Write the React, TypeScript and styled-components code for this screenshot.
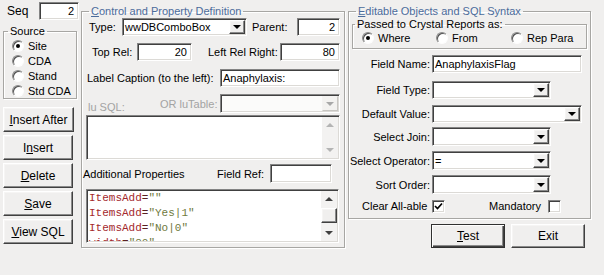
import React from "react"
import styled, { createGlobalStyle, css } from "styled-components"

const GlobalStyle = createGlobalStyle`
  html, body {
    margin: 0;
    padding: 0;
    background: #f0efee;
  }
  * {
    box-sizing: border-box;
  }
  body {
    font-family: "Liberation Sans", Arial, sans-serif;
    font-size: 11px;
    color: #000;
  }
`

const Window = styled.div`
  width: 604px;
  height: 275px;
  display: flex;
  background: #f0efee;
  overflow: hidden;
`

const LeftCol = styled.div`
  width: 74px;
  margin-left: 3px;
  display: flex;
  flex-direction: column;
`

const MidCol = styled.div`
  display: flex;
  flex-direction: column;
  margin-left: 4px;
`

const RightCol = styled.div`
  display: flex;
  flex-direction: column;
  margin-left: 3px;
`

const Row = styled.div<{ $h?: number; $mt?: number }>`
  display: flex;
  align-items: center;
  height: ${(p) => p.$h ?? 18}px;
  margin-top: ${(p) => p.$mt ?? 0}px;
  flex-shrink: 0;
`

const Label = styled.span<{ $w?: number; $ml?: number; $right?: boolean; $muted?: boolean; $low?: boolean }>`
  display: block;
  width: ${(p) => (p.$w ? `${p.$w}px` : "auto")};
  margin-left: ${(p) => p.$ml ?? 0}px;
  padding-right: ${(p) => (p.$right ? 2 : 0)}px;
  text-align: ${(p) => (p.$right ? "right" : "left")};
  color: ${(p) => (p.$muted ? "#a3a3a3" : "#000")};
  white-space: nowrap;
  flex-shrink: 0;
  align-self: ${(p) => (p.$low ? "flex-end" : "center")};
`

const sunken = css`
  border: 1px solid;
  border-color: #848484 #ffffff #ffffff #848484;
  box-shadow: inset 1px 1px 0 #404040, inset -1px -1px 0 #dcdad6;
`

const raised = css`
  border: 1px solid;
  border-color: #ffffff #404040 #404040 #ffffff;
  box-shadow: inset -1px -1px 0 #8a8a8a, inset 1px 1px 0 #f6f5f4;
  background: #f0efee;
`

const TextBox = styled.div<{ $w: number; $h?: number; $ml?: number; $right?: boolean }>`
  ${sunken}
  width: ${(p) => p.$w}px;
  height: ${(p) => p.$h ?? 18}px;
  margin-left: ${(p) => p.$ml ?? 0}px;
  background: #fff;
  display: flex;
  align-items: center;
  justify-content: ${(p) => (p.$right ? "flex-end" : "flex-start")};
  padding: 0 ${(p) => (p.$right ? 4 : 2)}px 0 2px;
  flex-shrink: 0;
  white-space: nowrap;
  overflow: hidden;
`

const ComboBox = styled.div<{ $w: number; $h?: number; $ml?: number; $disabled?: boolean }>`
  ${sunken}
  width: ${(p) => p.$w}px;
  height: ${(p) => p.$h ?? 18}px;
  margin-left: ${(p) => p.$ml ?? 0}px;
  background: ${(p) => (p.$disabled ? "#fbfbfa" : "#fff")};
  display: flex;
  align-items: stretch;
  padding: 1px;
  flex-shrink: 0;
`

const ComboText = styled.span`
  flex: 1;
  display: flex;
  align-items: center;
  padding-left: 1px;
  white-space: nowrap;
  overflow: hidden;
`

const DropButton = styled.span<{ $disabled?: boolean }>`
  ${raised}
  width: 16px;
  display: flex;
  align-items: center;
  justify-content: center;
  ${(p) =>
    p.$disabled &&
    css`
      border-color: #f4f3f2 #c8c6c2 #c8c6c2 #f4f3f2;
      box-shadow: none;
      background: #f3f2f0;
    `}

  &::after {
    content: "";
    width: 0;
    height: 0;
    border-left: 4px solid transparent;
    border-right: 4px solid transparent;
    border-top: 4px solid ${(p) => (p.$disabled ? "#a8a8a8" : "#000")};
  }
`

const Group = styled.fieldset<{ $w: number; $mt?: number; $ml?: number; $pb?: number }>`
  margin: ${(p) => p.$mt ?? 0}px 0 0 ${(p) => p.$ml ?? 0}px;
  padding: 0 0 ${(p) => p.$pb ?? 0}px 0;
  width: ${(p) => p.$w}px;
  min-inline-size: 0;
  border: 1px solid #a7a6a3;
  box-shadow: inset 1px 1px 0 #fff, 1px 1px 0 #fff;
  display: flex;
  flex-direction: column;
`

const Legend = styled.legend<{ $ml: number; $blue?: boolean }>`
  margin-left: ${(p) => p.$ml}px;
  padding: 0 2px;
  line-height: 13px;
  height: 13px;
  color: ${(p) => (p.$blue ? "#4c6c9c" : "#000")};
  white-space: nowrap;
`

const RadioItem = styled.label<{ $w?: number; $ml?: number; $h?: number }>`
  display: flex;
  align-items: center;
  gap: 4px;
  height: ${(p) => p.$h ?? 15}px;
  width: ${(p) => (p.$w ? `${p.$w}px` : "auto")};
  margin-left: ${(p) => p.$ml ?? 0}px;
  flex-shrink: 0;
  white-space: nowrap;
`

const RadioDot = styled.span<{ $on?: boolean }>`
  width: 12px;
  height: 12px;
  border-radius: 50%;
  background: #fff;
  border: 1px solid;
  border-color: #8a8a8a #fdfdfd #fdfdfd #8a8a8a;
  box-shadow: inset 1px 1px 0 #505050;
  position: relative;
  flex-shrink: 0;

  &::after {
    content: "";
    display: ${(p) => (p.$on ? "block" : "none")};
    position: absolute;
    left: 3px;
    top: 3px;
    width: 4px;
    height: 4px;
    border-radius: 50%;
    background: #000;
  }
`

const CheckBox = styled.span<{ $ml?: number }>`
  ${sunken}
  width: 13px;
  height: 13px;
  margin-left: ${(p) => p.$ml ?? 0}px;
  background: #fff;
  display: flex;
  align-items: center;
  justify-content: center;
  flex-shrink: 0;
`

const Button = styled.button<{ $w: number; $h?: number; $mt?: number; $ml?: number; $default?: boolean }>`
  ${raised}
  width: ${(p) => p.$w}px;
  height: ${(p) => p.$h ?? 25}px;
  margin: ${(p) => p.$mt ?? 0}px 0 0 ${(p) => p.$ml ?? 0}px;
  padding: 0;
  font: inherit;
  font-size: 12px;
  color: #000;
  flex-shrink: 0;
  ${(p) =>
    p.$default &&
    css`
      border-color: #303030;
      box-shadow: inset 1px 1px 0 #fff, inset -1px -1px 0 #404040, inset -2px -2px 0 #8a8a8a;
    `}
`

const Memo = styled.div<{ $w: number; $h: number; $mt?: number; $ml?: number }>`
  ${sunken}
  width: ${(p) => p.$w}px;
  height: ${(p) => p.$h}px;
  margin: ${(p) => p.$mt ?? 0}px 0 0 ${(p) => p.$ml ?? 0}px;
  background: #fff;
  display: flex;
  padding: 1px;
  flex-shrink: 0;
`

const MemoBody = styled.div`
  flex: 1;
  overflow: hidden;
  padding: 0 0 0 1px;
  font-family: "Liberation Mono", "Courier New", monospace;
  font-size: 11px;
  line-height: 15px;
`

const ScrollBar = styled.div`
  width: 16px;
  background: #f3f2f1;
  display: flex;
  flex-direction: column;
  justify-content: space-between;
`

const ScrollArrow = styled.span<{ $down?: boolean; $dim?: boolean }>`
  height: 16px;
  display: flex;
  align-items: center;
  justify-content: center;

  &::after {
    content: "";
    width: 0;
    height: 0;
    border-left: 4px solid transparent;
    border-right: 4px solid transparent;
    ${(p) =>
      p.$down
        ? css`border-top: 4px solid ${p.$dim ? "#b4b4b4" : "#404040"};`
        : css`border-bottom: 4px solid ${p.$dim ? "#b4b4b4" : "#404040"};`}
  }
`

const ScrollThumb = styled.span`
  ${raised}
  height: 15px;
  margin: 1px 0 0 0;
`

const ScrollTrack = styled.div`
  flex: 1;
`

const Key = styled.span`
  color: #a4282c;
`
const Eq = styled.span`
  color: #5a2020;
`
const Str = styled.span`
  color: #6f7a3e;
`

const CodeLine: React.FC<{ k: string; v: string }> = ({ k, v }) => (
  <div>
    <Key>{k}</Key>
    <Eq>=</Eq>
    <Str>{v}</Str>
  </div>
)

const Check = () => (
  <svg width="9" height="9" viewBox="0 0 9 9">
    <path d="M1 4 L3.5 6.5 L8 1.5" stroke="#000" strokeWidth="1.7" fill="none" />
  </svg>
)

const sourceItems = ["Site", "CDA", "Stand", "Std CDA"]

const App: React.FC = () => {
  return (
    <>
      <GlobalStyle />
      <Window>
        <LeftCol>
          <Row $h={18} $mt={2}>
            <Label $w={32} $ml={4}>
              <span style={{ fontSize: 12 }}>Seq</span>
            </Label>
            <TextBox $w={40} $right>
              2
            </TextBox>
          </Row>
          <Group $w={74} $mt={5}>
            <Legend $ml={4}>Source</Legend>
            {sourceItems.map((s, i) => (
              <RadioItem key={s} $ml={8}>
                <RadioDot $on={i === 0} />
                <span style={{ marginLeft: 0 }}>{s}</span>
              </RadioItem>
            ))}
          </Group>
          <Button $w={71} $mt={8}>
            <u>I</u>nsert After
          </Button>
          <Button $w={70} $mt={3}>
            I<u>n</u>sert
          </Button>
          <Button $w={70} $mt={3}>
            <u>D</u>elete
          </Button>
          <Button $w={70} $mt={3}>
            <u>S</u>ave
          </Button>
          <Button $w={70} $mt={3}>
            <u>V</u>iew SQL
          </Button>
        </LeftCol>

        <MidCol>
          <Group $w={264} $mt={5} $pb={4}>
            <Legend $ml={7} $blue>
              <u>C</u>ontrol and Property Definition
            </Legend>
            <Row>
              <Label $w={33} $ml={7}>
                Type:
              </Label>
              <ComboBox $w={125}>
                <ComboText>wwDBComboBox</ComboText>
                <DropButton />
              </ComboBox>
              <Label $w={45} $ml={5}>
                Parent:
              </Label>
              <TextBox $w={43} $right>
                2
              </TextBox>
            </Row>
            <Row $mt={7}>
              <Label $w={45} $ml={10}>
                Top Rel:
              </Label>
              <TextBox $w={55} $right>
                20
              </TextBox>
              <Label $w={72} $ml={16}>
                Left Rel Right:
              </Label>
              <TextBox $w={60} $right>
                80
              </TextBox>
            </Row>
            <Row $mt={8}>
              <Label $w={133} $ml={5}>
                Label Caption (to the left):
              </Label>
              <TextBox $w={120}>Anaphylaxis:</TextBox>
            </Row>
            <Row $mt={7} $h={19}>
              <Label $w={72} $ml={6} $muted $low>
                lu SQL:
              </Label>
              <Label $w={60} $muted>
                OR luTable:
              </Label>
              <ComboBox $w={120} $h={19} $disabled>
                <ComboText />
                <DropButton $disabled />
              </ComboBox>
            </Row>
            <Memo $w={254} $h={45} $mt={2} $ml={4}>
              <MemoBody />
              <ScrollBar>
                <ScrollArrow $dim />
                <ScrollArrow $down $dim />
              </ScrollBar>
            </Memo>
            <Row $mt={4} $h={19}>
              <Label $w={134} $ml={1}>
                Additional Properties
              </Label>
              <Label $w={53}>Field Ref:</Label>
              <TextBox $w={62} $h={19} />
            </Row>
            <Memo $w={253} $h={54} $mt={6} $ml={4}>
              <MemoBody>
                <CodeLine k="ItemsAdd" v={'""'} />
                <CodeLine k="ItemsAdd" v={'"Yes|1"'} />
                <CodeLine k="ItemsAdd" v={'"No|0"'} />
                <CodeLine k="width" v={'"80"'} />
              </MemoBody>
              <ScrollBar>
                <ScrollArrow />
                <ScrollThumb />
                <ScrollTrack />
                <ScrollArrow $down />
              </ScrollBar>
            </Memo>
          </Group>
        </MidCol>

        <RightCol>
          <Group $w={243} $mt={5} $pb={5}>
            <Legend $ml={7} $blue>
              <u>E</u>ditable Objects and SQL Syntax
            </Legend>
            <Group $w={235} $ml={3} $pb={4}>
              <Legend $ml={2}>Passed to Crystal Reports as:</Legend>
              <Row $h={13}>
                <RadioItem $w={74} $ml={9} $h={13}>
                  <RadioDot $on />
                  Where
                </RadioItem>
                <RadioItem $w={75} $h={13}>
                  <RadioDot />
                  From
                </RadioItem>
                <RadioItem $h={13}>
                  <RadioDot />
                  Rep Para
                </RadioItem>
              </Row>
            </Group>
            <Row $mt={6}>
              <Label $w={83} $right>
                Field Name:
              </Label>
              <TextBox $w={150}>AnaphylaxisFlag</TextBox>
            </Row>
            <Row $mt={8}>
              <Label $w={83} $right>
                Field Type:
              </Label>
              <ComboBox $w={119}>
                <ComboText />
                <DropButton />
              </ComboBox>
            </Row>
            <Row $mt={6}>
              <Label $w={83} $right>
                Default Value:
              </Label>
              <ComboBox $w={150}>
                <ComboText />
                <DropButton />
              </ComboBox>
            </Row>
            <Row $mt={4} $h={19}>
              <Label $w={83} $right>
                Select Join:
              </Label>
              <ComboBox $w={119} $h={19}>
                <ComboText />
                <DropButton />
              </ComboBox>
            </Row>
            <Row $mt={5} $h={19}>
              <Label $w={83} $right>
                Select Operator:
              </Label>
              <ComboBox $w={119} $h={19}>
                <ComboText>=</ComboText>
                <DropButton />
              </ComboBox>
            </Row>
            <Row $mt={5} $h={19}>
              <Label $w={83} $right>
                Sort Order:
              </Label>
              <ComboBox $w={119} $h={19}>
                <ComboText />
                <DropButton />
              </ComboBox>
            </Row>
            <Row $mt={5} $h={14}>
              <Label $w={70} $ml={13}>
                Clear All-able
              </Label>
              <CheckBox>
                <Check />
              </CheckBox>
              <Label $w={59} $ml={44}>
                Mandatory
              </Label>
              <CheckBox />
            </Row>
          </Group>
          <Row $h={24} $mt={5}>
            <Button $w={74} $h={24} $ml={83} $default>
              <u>T</u>est
            </Button>
            <Button $w={74} $h={24} $ml={6}>
              Exit
            </Button>
          </Row>
        </RightCol>
      </Window>
    </>
  )
}

export default App
